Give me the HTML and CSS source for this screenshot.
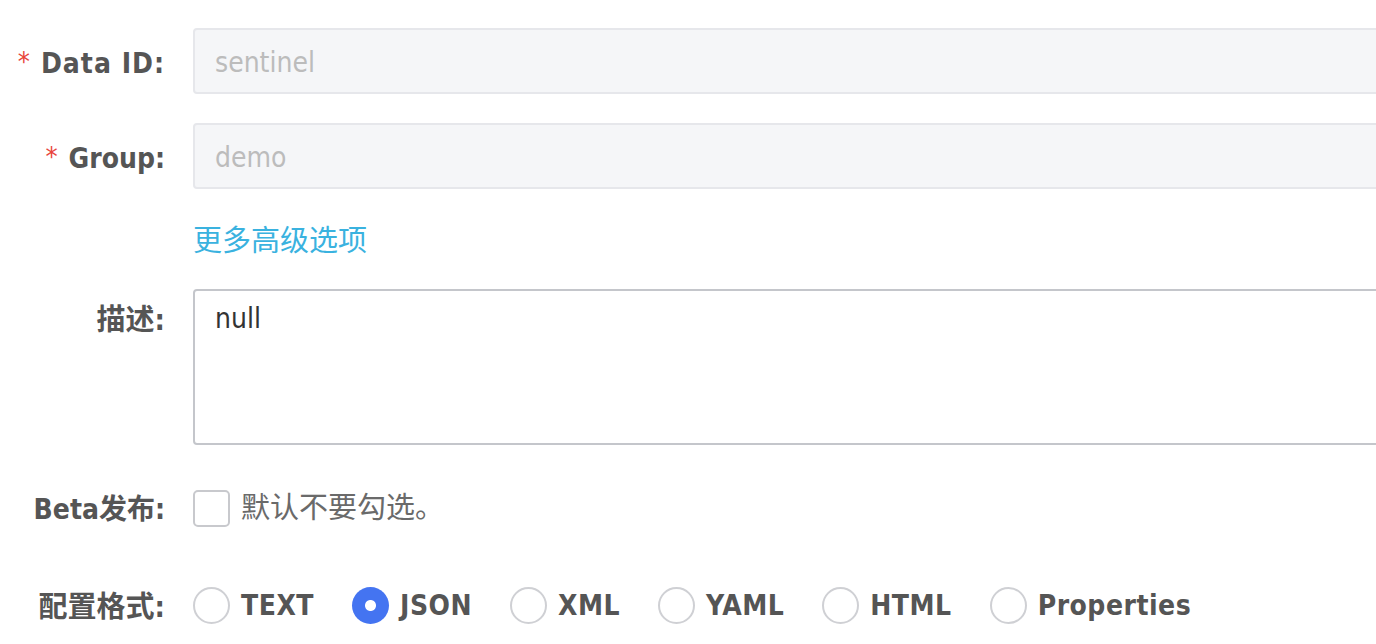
FILE: index.html
```html
<!DOCTYPE html>
<html lang="zh-CN">
<head>
<meta charset="utf-8">
<title>配置</title>
<link rel="stylesheet" href="styles.css">
</head>
<body>
<form class="form">
  <div class="row row-id">
    <label class="label"><span class="req">*</span><span class="wide">Data ID:</span></label>
    <div class="control"><div class="input disabled">sentinel</div></div>
  </div>
  <div class="row row-group">
    <label class="label"><span class="req">*</span>Group:</label>
    <div class="control"><div class="input disabled">demo</div></div>
  </div>
  <div class="row row-more">
    <div class="label"></div>
    <div class="control"><a class="more" href="#">更多高级选项</a></div>
  </div>
  <div class="row row-desc">
    <label class="label label-top cjk">描述:</label>
    <div class="control"><div class="textarea">null</div></div>
  </div>
  <div class="row row-beta">
    <label class="label">Beta发布:</label>
    <div class="control inline">
      <span class="checkbox"></span>
      <span class="hint">默认不要勾选。</span>
    </div>
  </div>
  <div class="row row-format">
    <label class="label cjk">配置格式:</label>
    <div class="control inline radios">
      <span class="radio-item"><span class="radio"></span><span class="radio-text">TEXT</span></span>
      <span class="radio-item"><span class="radio checked"></span><span class="radio-text">JSON</span></span>
      <span class="radio-item"><span class="radio"></span><span class="radio-text">XML</span></span>
      <span class="radio-item"><span class="radio"></span><span class="radio-text">YAML</span></span>
      <span class="radio-item"><span class="radio"></span><span class="radio-text">HTML</span></span>
      <span class="radio-item"><span class="radio"></span><span class="radio-text">Properties</span></span>
    </div>
  </div>
</form>
</body>
</html>
```

FILE: styles.css
```css
html, body {
  margin: 0;
  padding: 0;
  background: #ffffff;
  overflow: hidden;
}
body {
  width: 1376px;
  height: 644px;
  font-family: "DejaVu Sans Condensed", "DejaVu Sans", "Noto Sans CJK SC", sans-serif;
  font-stretch: condensed;
  color: #333;
}
.form {
  display: flex;
  flex-direction: column;
  padding-top: 28px;
}
.row {
  display: flex;
  align-items: center;
}
.label {
  width: 165px;
  flex: none;
  margin-right: 28px;
  padding-top: 4px;
  text-align: right;
  font-size: 28px;
  font-weight: 700;
  color: #555;
  line-height: 36px;
  white-space: nowrap;
}
.label.cjk {
  font-size: 29px;
}
.wide {
  letter-spacing: 1px;
}
.req {
  color: #e8453c;
  font-weight: 400;
  font-size: 27px;
  margin-right: 11px;
  vertical-align: 2px;
}
.control {
  flex: 1;
  margin-right: -20px;
  min-width: 0;
}
.input {
  box-sizing: border-box;
  height: 66px;
  border: 2px solid #e6e7eb;
  border-radius: 4px;
  padding: 3px 20px 0;
  display: flex;
  align-items: center;
  font-size: 28px;
}
.input.disabled {
  background: #f5f6f8;
  color: #bcbcbc;
}
.row-group { margin-top: 29px; }
.row-more { margin-top: 32px; }
.more {
  font-size: 29px;
  line-height: 36px;
  color: #3ab2df;
  text-decoration: none;
  position: relative;
  top: 2px;
}
.row-desc {
  margin-top: 32px;
  align-items: flex-start;
}
.label-top { padding-top: 13px; }
.textarea {
  box-sizing: border-box;
  height: 156px;
  border: 2px solid #c4c6cb;
  border-radius: 4px;
  padding: 6px 20px;
  font-size: 28px;
  line-height: 44px;
  color: #333;
}
.row-beta { margin-top: 43px; }
.inline {
  display: flex;
  align-items: center;
}
.checkbox {
  box-sizing: border-box;
  width: 37px;
  height: 37px;
  border: 2px solid #c8c9cd;
  border-radius: 5px;
  background: #fff;
  flex: none;
}
.hint {
  margin-left: 11px;
  font-size: 29px;
  color: #6a6a6a;
  line-height: 36px;
}
.row-format { margin-top: 57px; }
.radios { gap: 38px; }
.radio-item {
  display: flex;
  align-items: center;
}
.radio {
  box-sizing: border-box;
  width: 37px;
  height: 37px;
  border: 2px solid #cfd0d4;
  border-radius: 50%;
  background: #fff;
  flex: none;
}
.radio.checked {
  border: none;
  background: radial-gradient(circle, #ffffff 0 5px, #4474f1 6px);
}
.radio-text {
  margin-left: 11px;
  font-size: 28px;
  font-weight: 700;
  letter-spacing: 0.5px;
  color: #555;
  line-height: 36px;
  padding-top: 2px;
}
```
